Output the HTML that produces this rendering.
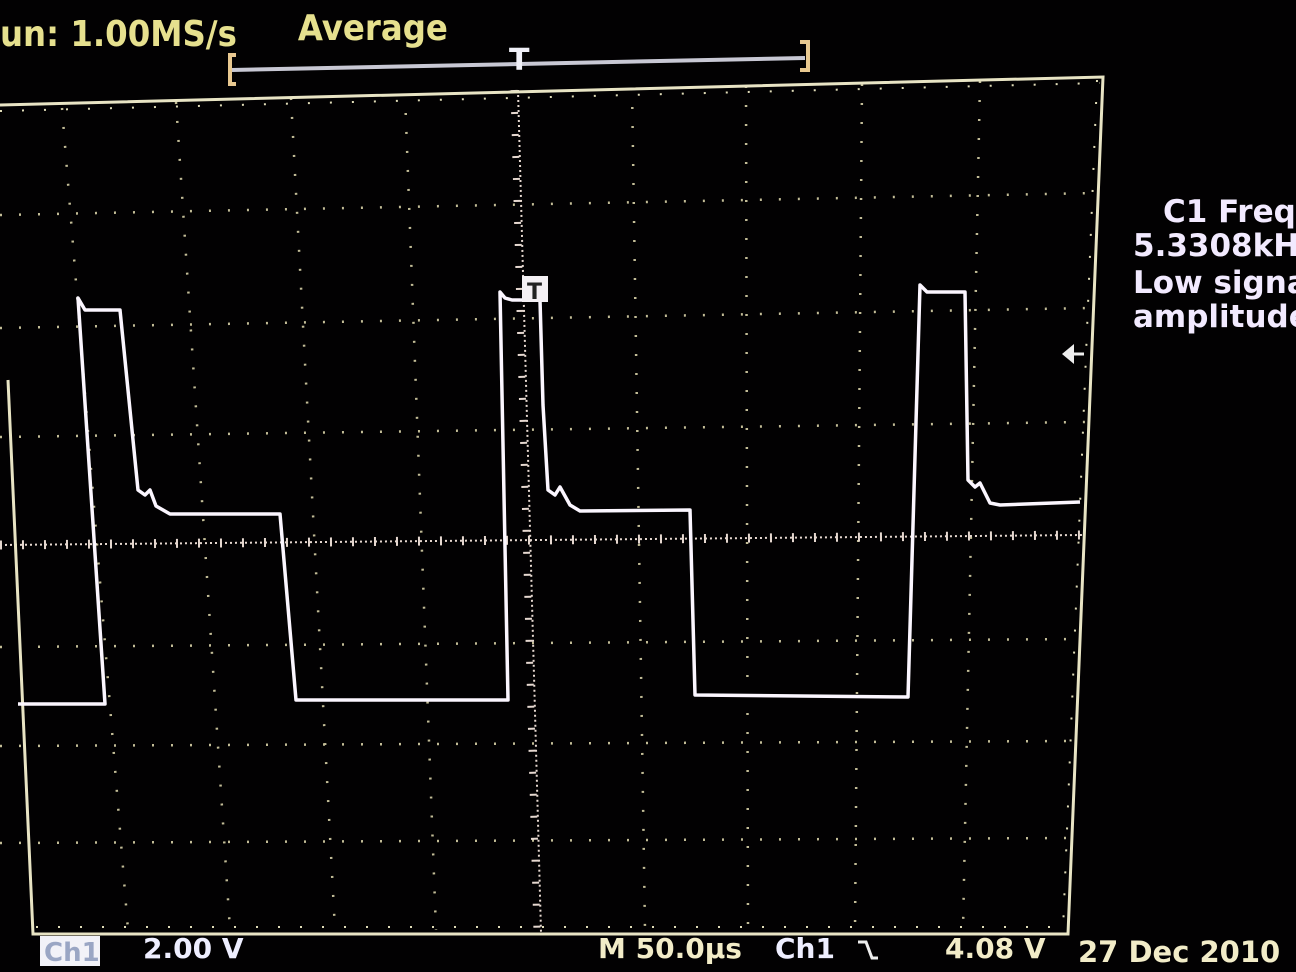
<!DOCTYPE html>
<html><head><meta charset="utf-8"><style>
html,body{margin:0;padding:0;background:#000;width:1296px;height:972px;overflow:hidden}
svg{display:block}
text{font-family:"DejaVu Sans","Liberation Sans",sans-serif;font-weight:bold}
</style></head><body>
<svg width="1296" height="972" viewBox="0 0 1296 972" xmlns="http://www.w3.org/2000/svg">
<rect width="1296" height="972" fill="#020102"/>
<g stroke="#d8d2a8" stroke-width="2.5" stroke-dasharray="2 17" fill="none" opacity="0.9">
<line x1="62" y1="108" x2="128" y2="930"/>
<line x1="176" y1="102" x2="230" y2="930"/>
<line x1="291" y1="98" x2="335" y2="930"/>
<line x1="405" y1="94" x2="436" y2="930"/>
<line x1="632" y1="88" x2="645" y2="930"/>
<line x1="746" y1="86" x2="748" y2="930"/>
<line x1="862" y1="84" x2="855" y2="930"/>
<line x1="980" y1="81" x2="963" y2="930"/>
<line x1="0" y1="215" x2="1095" y2="193"/>
<line x1="0" y1="328" x2="1090" y2="308"/>
<line x1="0" y1="437" x2="1085" y2="422"/>
<line x1="0" y1="647" x2="1078" y2="639"/>
<line x1="0" y1="746" x2="1075" y2="741"/>
<line x1="0" y1="843" x2="1072" y2="838"/>
</g>
<g stroke="#e6d8d0" fill="none">
<line x1="518" y1="90" x2="541" y2="932" stroke-width="2" stroke-dasharray="2 3"/>
<line x1="0" y1="545" x2="1082" y2="535" stroke-width="2" stroke-dasharray="2 3"/>
<line x1="510" y1="90" x2="533" y2="932" stroke-width="7" stroke-dasharray="2 20" transform="translate(4,0)"/>
<line x1="0" y1="545" x2="1082" y2="535" stroke-width="9" stroke-dasharray="2 20"/>
</g>
<polyline points="0,105 1103,77 1068,934 33,934 8,380" fill="none" stroke="#e8e4c4" stroke-width="3"/>
<g stroke="#e0dcb8" stroke-width="2" stroke-dasharray="2 20">
<line x1="0" y1="111" x2="1100" y2="83"/>
<line x1="36" y1="927" x2="1066" y2="927"/>
<line x1="1097" y1="80" x2="1063" y2="930"/>
</g>
<polyline fill="none" stroke="#fbf6ff" stroke-width="3.5" stroke-linejoin="round" points="18,704 105,704 78,298 85,310 120,310 138,490 145,495 150,490 156,506 170,514 280,514 296,700 508,700 500,292 505,298 512,300 522,300 540,300 543,405 548,490 555,495 560,487 570,505 580,511 690,510 695,695 908,697 920,285 927,292 965,292 968,480 975,487 980,483 990,503 1000,505 1080,502"/>
<rect x="522" y="276" width="26" height="26" fill="#f4f0f4"/>
<text x="527" y="299" font-size="22" fill="#222">T</text>
<polygon points="1062,354 1074,344 1074,364" fill="#eee"/>
<line x1="1070" y1="354" x2="1084" y2="354" stroke="#eee" stroke-width="3"/>
<text x="0" y="46" font-size="36" fill="#e6e08e" transform="scale(0.9,1)">un: 1.00MS/s</text>
<text x="331" y="40" font-size="36" fill="#e6e08e" transform="scale(0.9,1)">Average</text>
<line x1="232" y1="70" x2="805" y2="58" stroke="#c8c8d4" stroke-width="4"/>
<path d="M236,55 L230,55 L230,84 L236,84" stroke="#e8c890" stroke-width="4" fill="none"/>
<path d="M800,42 L808,42 L808,70 L800,70" stroke="#e8c890" stroke-width="4" fill="none"/>
<text x="509" y="70" font-size="30" fill="#f0f0f8">T</text>
<g fill="#f2eaff" font-size="31">
<text x="1163" y="222">C1 Freq</text>
<text x="1133" y="256">5.3308kHz</text>
<text x="1133" y="293">Low signal</text>
<text x="1133" y="327">amplitude</text>
</g>
<rect x="40" y="936" width="60" height="30" fill="#f2f2f8"/>
<text x="44" y="961" font-size="26" fill="#9aa6c4" font-weight="normal">Ch1</text>
<text x="143" y="958" font-size="28" fill="#eeeeff">2.00 V</text>
<text x="598" y="958" font-size="28" fill="#f2ecc8">M 50.0µs</text>
<text x="775" y="958" font-size="28" fill="#eeeeff">Ch1</text>
<path d="M858,942 L866,942 L872,958 L878,958" stroke="#eee" stroke-width="3" fill="none"/>
<text x="945" y="958" font-size="28" fill="#f2ecc8">4.08 V</text>
<text x="1078" y="962" font-size="29" fill="#f2ecc8">27 Dec 2010</text>
</svg>
</body></html>
